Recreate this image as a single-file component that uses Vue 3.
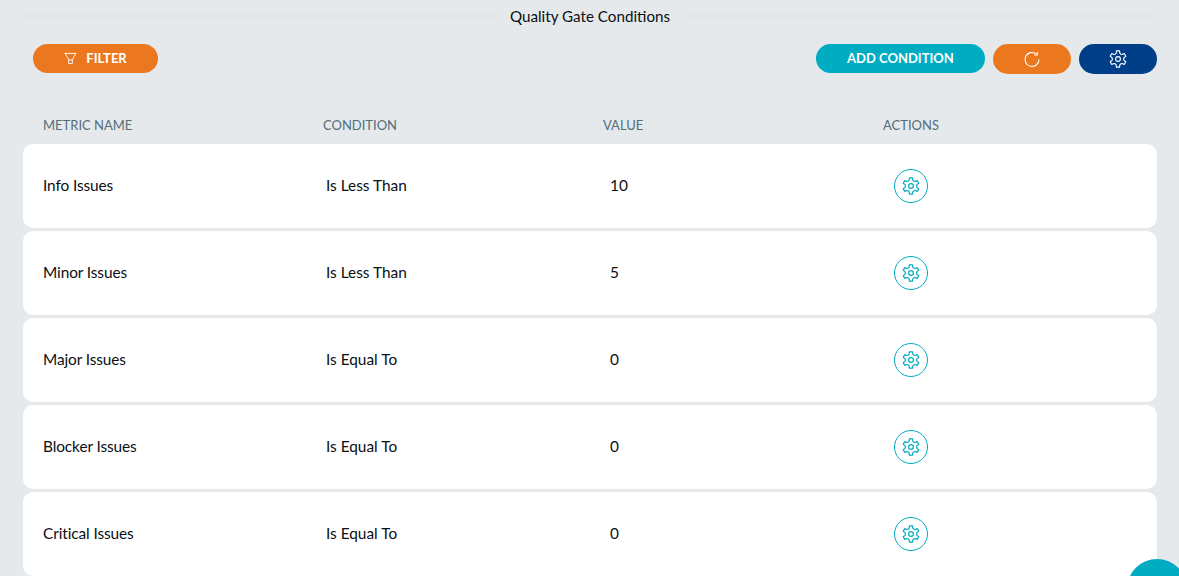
<script setup>
const rows = [
  { name: 'Info Issues', condition: 'Is Less Than', value: '10' },
  { name: 'Minor Issues', condition: 'Is Less Than', value: '5' },
  { name: 'Major Issues', condition: 'Is Equal To', value: '0' },
  { name: 'Blocker Issues', condition: 'Is Equal To', value: '0' },
  { name: 'Critical Issues', condition: 'Is Equal To', value: '0' },
]

// Six-lobed cog outline, generated so every tooth is identical.
const polar = (radius, degrees) => {
  const angle = (degrees * Math.PI) / 180
  return `${(12 + radius * Math.cos(angle)).toFixed(2)} ${(12 + radius * Math.sin(angle)).toFixed(2)}`
}
const gearOutline = [0, 1, 2, 3, 4, 5]
  .map((i) => {
    const center = -90 + i * 60
    return `${polar(7.4, center - 30)} L${polar(8.2, center - 17)} L${polar(11, center - 11)} L${polar(11, center + 11)} L${polar(8.2, center + 17)}`
  })
  .join(' L')
const gear = `M${gearOutline} Z M15.200 12a3.200 3.200 0 1 1-6.400 0 3.200 3.200 0 0 1 6.400 0Z`
</script>

<template>
  <div class="page">
    <div class="title-row">
      <span class="rule"></span>
      <span class="title">Quality Gate Conditions</span>
      <span class="rule"></span>
    </div>

    <div class="toolbar">
      <button class="btn filter">
        <svg class="filter-icon" viewBox="0 0 14 14" fill="none" stroke="currentColor" stroke-width="1">
          <path d="M1 1.500h12L9 8v4.500H5V8L1 1.500Z" />
          <path d="M5 8.500h4" />
        </svg>
        <span class="label">FILTER</span>
      </button>
      <div class="actions">
        <button class="btn add"><span class="label">ADD CONDITION</span></button>
        <button class="btn icon-btn refresh">
          <svg viewBox="0 0 18 18" width="18" height="18" fill="none" stroke="currentColor" stroke-width="1.100">
            <path d="M16 9.500A7 7 0 1 1 13.500 4.100" />
            <path d="M14.300 1.900V5H11.200" />
          </svg>
        </button>
        <button class="btn icon-btn settings">
          <svg viewBox="0 0 24 24" width="18" height="18" fill="none" stroke="currentColor" stroke-width="1.500" stroke-linejoin="round">
            <path :d="gear" />
          </svg>
        </button>
      </div>
    </div>

    <div class="grid head">
      <span>METRIC NAME</span>
      <span>CONDITION</span>
      <span>VALUE</span>
      <span>ACTIONS</span>
    </div>

    <div class="rows">
      <div v-for="row in rows" :key="row.name" class="grid row">
        <span class="cell name">{{ row.name }}</span>
        <span class="cell inset-small">{{ row.condition }}</span>
        <span class="cell inset-large">{{ row.value }}</span>
        <span class="inset-action">
          <button class="circle" :aria-label="'Settings for ' + row.name">
            <svg viewBox="0 0 24 24" width="18" height="18" fill="none" stroke="currentColor" stroke-width="1.600" stroke-linejoin="round">
              <path :d="gear" />
            </svg>
          </button>
        </span>
      </div>
    </div>

    <div class="fab"></div>
  </div>
</template>

<style scoped>
.page {
  position: relative;
  box-sizing: border-box;
  width: 1179px;
  height: 576px;
  overflow: hidden;
  padding: 7px 22px 0 23px;
  background: #e5e9ec;
  font-family: Lato, "Open Sans", sans-serif;
  color: #0b0f14;
}
.title-row {
  display: flex;
  align-items: center;
  gap: 14px;
  height: 18px;
}
.rule {
  flex: 1;
  height: 2px;
  margin-top: -1px;
  background: #e1e5e8;
}
.title {
  font-size: 15.200px;
  line-height: 18px;
}
.toolbar {
  display: flex;
  justify-content: space-between;
  align-items: flex-start;
  margin-top: 19px;
  padding-left: 10px;
}
.actions {
  display: flex;
  gap: 8px;
}
.btn {
  display: flex;
  align-items: center;
  justify-content: center;
  border: 0;
  padding: 0;
  height: 29px;
  border-radius: 15px;
  color: #fff;
  font-family: inherit;
  font-size: 13px;
  font-weight: 700;
}
.label {
  padding-bottom: 1px;
}
.filter {
  width: 125px;
  gap: 9px;
  background: #eb771f;
}
.filter-icon {
  width: 13px;
  height: 13px;
}
.add {
  width: 169px;
  background: #00acc1;
}
.icon-btn {
  width: 78px;
  height: 30px;
}
.refresh {
  background: #eb771f;
}
.settings {
  background: #003f88;
}
.grid {
  display: grid;
  grid-template-columns: 280px 280px 280px 1fr;
  padding-left: 20px;
}
.head {
  margin-top: 41px;
  height: 20px;
  align-items: center;
  color: #546e7a;
  font-size: 13px;
  line-height: 20px;
}
.rows {
  display: flex;
  flex-direction: column;
  gap: 3px;
  margin-top: 9px;
}
.row {
  flex: none;
  height: 84px;
  align-items: center;
  background: #fff;
  border-radius: 10px;
  font-size: 15.400px;
}
.cell {
  padding-bottom: 2px;
}
.name {
  letter-spacing: -0.1px;
}
.inset-small {
  padding-left: 3px;
}
.inset-large {
  padding-left: 7px;
}
.inset-action {
  padding-left: 11px;
  display: flex;
}
.circle {
  display: flex;
  align-items: center;
  justify-content: center;
  box-sizing: border-box;
  width: 34px;
  height: 34px;
  padding: 0;
  border: 1px solid #00acc1;
  border-radius: 50%;
  background: #fff;
  color: #00acc1;
}
.fab {
  position: absolute;
  left: 1127px;
  top: 559px;
  width: 60px;
  height: 60px;
  border-radius: 50%;
  background: #00acc1;
}
</style>

<style>
html, body {
  margin: 0;
  overflow: hidden;
  background: #e5e9ec;
}
</style>
